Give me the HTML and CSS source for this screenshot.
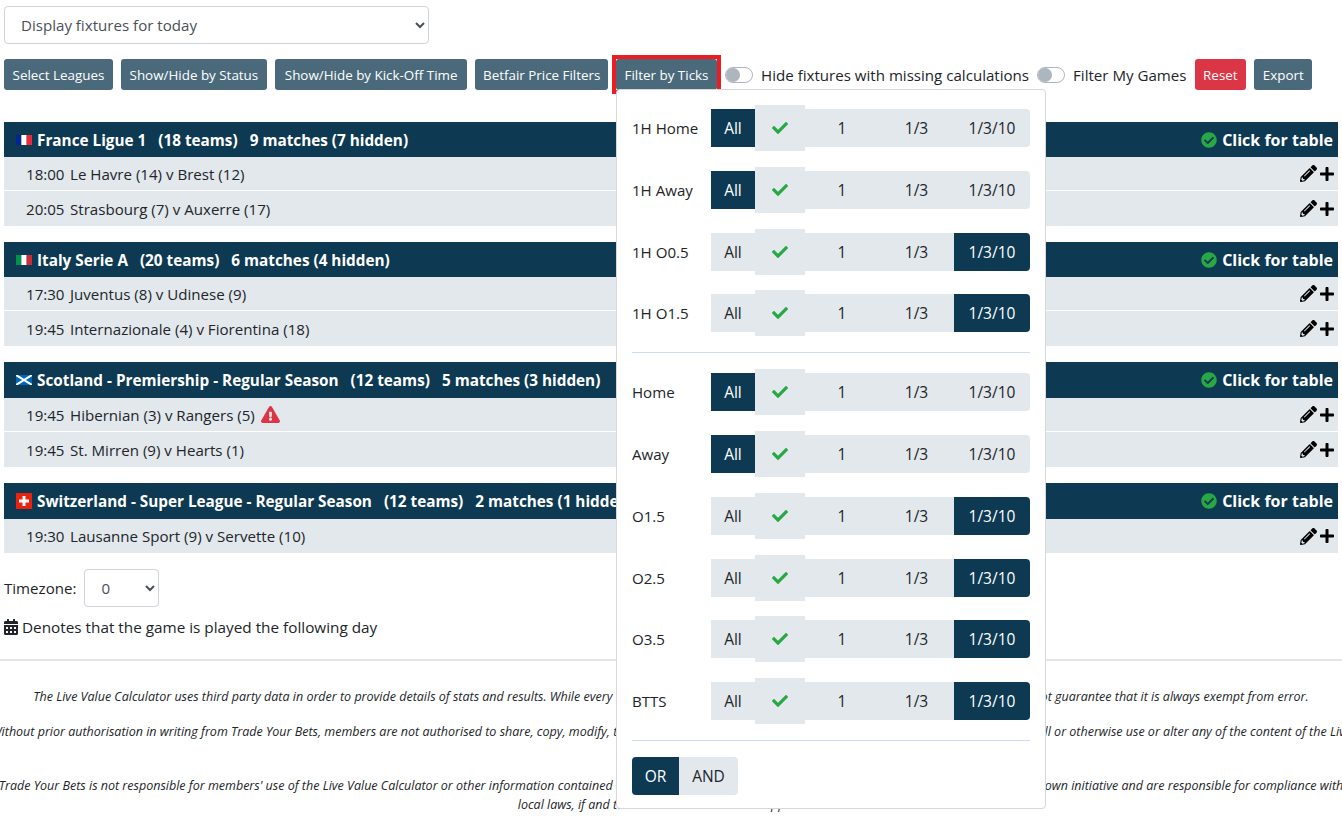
FILE: index.html
```html
<!DOCTYPE html>
<html lang="en">
<head>
    <meta charset="UTF-8">
    <title>Live Value Calculator</title>
    <link rel="stylesheet" href="styles.css">
</head>
<body>
    <svg class="defs" width="0" height="0">
        <symbol id="i-check" viewBox="0 0 512 512"><path d="M173.898 439.404l-166.4-166.4c-9.997-9.997-9.997-26.206 0-36.204l36.203-36.204c9.997-9.998 26.207-9.998 36.204 0L192 312.69 432.095 72.596c9.997-9.997 26.207-9.997 36.204 0l36.203 36.204c9.997 9.997 9.997 26.206 0 36.204l-294.4 294.401c-9.998 9.997-26.207 9.997-36.204-.001z"/></symbol>
        <symbol id="i-circle" viewBox="0 0 512 512"><path d="M504 256c0 136.967-111.033 248-248 248S8 392.967 8 256 119.033 8 256 8s248 111.033 248 248zM227.314 387.314l184-184c6.248-6.248 6.248-16.379 0-22.627l-22.627-22.627c-6.248-6.249-16.379-6.249-22.628 0L216 308.118l-70.059-70.059c-6.248-6.248-16.379-6.248-22.628 0l-22.627 22.627c-6.248 6.248-6.248 16.379 0 22.627l104 104c6.249 6.249 16.379 6.249 22.628.001z"/></symbol>
        <symbol id="i-pencil" viewBox="0 0 512 512"><path d="M497.9 142.1l-46.1 46.1c-4.7 4.7-12.3 4.7-17 0l-111-111c-4.7-4.7-4.7-12.3 0-17l46.1-46.1c18.7-18.7 49.1-18.7 67.9 0l60.1 60.1c18.8 18.7 18.8 49.1 0 67.9zM284.2 99.8L21.6 362.4.4 483.9c-2.9 16.4 11.4 30.6 27.8 27.8l121.5-21.3 262.6-262.6c4.7-4.7 4.7-12.3 0-17l-111-111c-4.8-4.7-12.4-4.7-17.1 0zM124.1 339.9c-5.5-5.5-5.5-14.3 0-19.8l154-154c5.5-5.5 14.3-5.5 19.8 0s5.5 14.3 0 19.8l-154 154c-5.5 5.5-14.3 5.5-19.8 0zM88 424h48v36.3l-64.5 11.3-31.1-31.1L51.7 376H88v48z"/></symbol>
        <symbol id="i-plus" viewBox="0 0 448 512"><path d="M416 208H272V64c0-17.67-14.33-32-32-32h-32c-17.67 0-32 14.33-32 32v144H32c-17.67 0-32 14.33-32 32v32c0 17.67 14.33 32 32 32h144v144c0 17.67 14.33 32 32 32h32c17.67 0 32-14.33 32-32V304h144c17.67 0 32-14.33 32-32v-32c0-17.67-14.33-32-32-32z"/></symbol>
        <symbol id="i-warn" viewBox="0 0 576 512"><path d="M569.517 440.013C587.975 472.007 564.806 512 527.94 512H48.054c-36.937 0-59.999-40.055-41.577-71.987L246.423 23.985c18.467-32.009 64.72-31.951 83.154 0l239.94 416.028zM288 354c-25.405 0-46 20.595-46 46s20.595 46 46 46 46-20.595 46-46-20.595-46-46-46zm-43.673-165.346l7.418 136c.347 6.364 5.609 11.346 11.982 11.346h48.546c6.373 0 11.635-4.982 11.982-11.346l7.418-136c.375-6.874-5.098-12.654-11.982-12.654h-63.383c-6.884 0-12.356 5.78-11.981 12.654z"/></symbol>
        <symbol id="i-cal" viewBox="0 0 448 512"><path d="M0 464c0 26.5 21.5 48 48 48h352c26.5 0 48-21.5 48-48V192H0v272zm320-196c0-6.6 5.4-12 12-12h40c6.6 0 12 5.4 12 12v40c0 6.6-5.4 12-12 12h-40c-6.6 0-12-5.4-12-12v-40zm0 128c0-6.6 5.4-12 12-12h40c6.6 0 12 5.4 12 12v40c0 6.6-5.4 12-12 12h-40c-6.6 0-12-5.4-12-12v-40zM192 268c0-6.6 5.4-12 12-12h40c6.6 0 12 5.4 12 12v40c0 6.6-5.4 12-12 12h-40c-6.6 0-12-5.4-12-12v-40zm0 128c0-6.6 5.4-12 12-12h40c6.6 0 12 5.4 12 12v40c0 6.6-5.4 12-12 12h-40c-6.6 0-12-5.4-12-12v-40zM64 268c0-6.6 5.4-12 12-12h40c6.6 0 12 5.4 12 12v40c0 6.6-5.4 12-12 12H76c-6.6 0-12-5.4-12-12v-40zm0 128c0-6.6 5.4-12 12-12h40c6.6 0 12 5.4 12 12v40c0 6.6-5.4 12-12 12H76c-6.6 0-12-5.4-12-12v-40zM400 64h-48V16c0-8.8-7.2-16-16-16h-32c-8.8 0-16 7.2-16 16v48H160V16c0-8.8-7.2-16-16-16h-32c-8.8 0-16 7.2-16 16v48H48C21.5 64 0 85.5 0 112v48h448v-48c0-26.5-21.5-48-48-48z"/></symbol>
    </svg>

    <div class="top">
        <select class="day-select">
            <option>Display fixtures for today</option>
        </select>

        <div class="toolbar">
            <button class="btn">Select Leagues</button>
            <button class="btn">Show/Hide by Status</button>
            <button class="btn btn-wide">Show/Hide by Kick-Off Time</button>
            <button class="btn btn-tight">Betfair Price Filters</button>
            <div class="filter-wrap">
                <button class="btn btn-marked">Filter by Ticks</button>
                <div class="ticks-menu">
                    <div class="tick-row">
                        <span class="tick-label">1H Home</span>
                        <div class="seg"><span class="on">All</span><span class="tick"><svg class="ico-check"><use href="#i-check"/></svg></span><span>1</span><span>1/3</span><span>1/3/10</span></div>
                    </div>
                    <div class="tick-row">
                        <span class="tick-label">1H Away</span>
                        <div class="seg"><span class="on">All</span><span class="tick"><svg class="ico-check"><use href="#i-check"/></svg></span><span>1</span><span>1/3</span><span>1/3/10</span></div>
                    </div>
                    <div class="tick-row">
                        <span class="tick-label">1H O0.5</span>
                        <div class="seg"><span>All</span><span class="tick"><svg class="ico-check"><use href="#i-check"/></svg></span><span>1</span><span>1/3</span><span class="on">1/3/10</span></div>
                    </div>
                    <div class="tick-row">
                        <span class="tick-label">1H O1.5</span>
                        <div class="seg"><span>All</span><span class="tick"><svg class="ico-check"><use href="#i-check"/></svg></span><span>1</span><span>1/3</span><span class="on">1/3/10</span></div>
                    </div>
                    <div class="menu-line"></div>
                    <div class="tick-row">
                        <span class="tick-label">Home</span>
                        <div class="seg"><span class="on">All</span><span class="tick"><svg class="ico-check"><use href="#i-check"/></svg></span><span>1</span><span>1/3</span><span>1/3/10</span></div>
                    </div>
                    <div class="tick-row">
                        <span class="tick-label">Away</span>
                        <div class="seg"><span class="on">All</span><span class="tick"><svg class="ico-check"><use href="#i-check"/></svg></span><span>1</span><span>1/3</span><span>1/3/10</span></div>
                    </div>
                    <div class="tick-row">
                        <span class="tick-label">O1.5</span>
                        <div class="seg"><span>All</span><span class="tick"><svg class="ico-check"><use href="#i-check"/></svg></span><span>1</span><span>1/3</span><span class="on">1/3/10</span></div>
                    </div>
                    <div class="tick-row">
                        <span class="tick-label">O2.5</span>
                        <div class="seg"><span>All</span><span class="tick"><svg class="ico-check"><use href="#i-check"/></svg></span><span>1</span><span>1/3</span><span class="on">1/3/10</span></div>
                    </div>
                    <div class="tick-row">
                        <span class="tick-label">O3.5</span>
                        <div class="seg"><span>All</span><span class="tick"><svg class="ico-check"><use href="#i-check"/></svg></span><span>1</span><span>1/3</span><span class="on">1/3/10</span></div>
                    </div>
                    <div class="tick-row">
                        <span class="tick-label">BTTS</span>
                        <div class="seg"><span>All</span><span class="tick"><svg class="ico-check"><use href="#i-check"/></svg></span><span>1</span><span>1/3</span><span class="on">1/3/10</span></div>
                    </div>
                    <div class="menu-line"></div>
                    <div class="logic"><span class="on">OR</span><span>AND</span></div>
                </div>
            </div>
            <span class="switch"></span>
            <span class="switch-text">Hide fixtures with missing calculations</span>
            <span class="switch"></span>
            <span class="switch-text">Filter My Games</span>
            <button class="btn btn-red">Reset</button>
            <button class="btn">Export</button>
        </div>

        <div class="league">
            <div class="league-head">
                <div class="league-title">
                    <svg class="flag" viewBox="0 0 3 2" preserveAspectRatio="none"><rect width="1" height="2" fill="#002395"/><rect x="1" width="1" height="2" fill="#fff"/><rect x="2" width="1" height="2" fill="#ed2939"/></svg>
                    <span>France Ligue 1</span><span>(18 teams)</span><span>9 matches (7 hidden)</span>
                </div>
                <div class="table-link"><svg class="ico-circle"><use href="#i-circle"/></svg>Click for table</div>
            </div>
            <div class="fixture">
                <span class="time">18:00</span><span>Le Havre (14) v Brest (12)</span>
                <div class="row-icons"><svg class="ico-pencil"><use href="#i-pencil"/></svg><svg class="ico-plus"><use href="#i-plus"/></svg></div>
            </div>
            <div class="fixture">
                <span class="time">20:05</span><span>Strasbourg (7) v Auxerre (17)</span>
                <div class="row-icons"><svg class="ico-pencil"><use href="#i-pencil"/></svg><svg class="ico-plus"><use href="#i-plus"/></svg></div>
            </div>
        </div>

        <div class="league">
            <div class="league-head">
                <div class="league-title">
                    <svg class="flag" viewBox="0 0 3 2" preserveAspectRatio="none"><rect width="1" height="2" fill="#009246"/><rect x="1" width="1" height="2" fill="#fff"/><rect x="2" width="1" height="2" fill="#ce2b37"/></svg>
                    <span>Italy Serie A</span><span>(20 teams)</span><span>6 matches (4 hidden)</span>
                </div>
                <div class="table-link"><svg class="ico-circle"><use href="#i-circle"/></svg>Click for table</div>
            </div>
            <div class="fixture">
                <span class="time">17:30</span><span>Juventus (8) v Udinese (9)</span>
                <div class="row-icons"><svg class="ico-pencil"><use href="#i-pencil"/></svg><svg class="ico-plus"><use href="#i-plus"/></svg></div>
            </div>
            <div class="fixture">
                <span class="time">19:45</span><span>Internazionale (4) v Fiorentina (18)</span>
                <div class="row-icons"><svg class="ico-pencil"><use href="#i-pencil"/></svg><svg class="ico-plus"><use href="#i-plus"/></svg></div>
            </div>
        </div>

        <div class="league">
            <div class="league-head league-head-tall">
                <div class="league-title">
                    <svg class="flag" viewBox="0 0 5 3" preserveAspectRatio="none"><rect width="5" height="3" fill="#0065bd"/><path d="M0 0L5 3M5 0L0 3" stroke="#fff" stroke-width=".6"/></svg>
                    <span>Scotland - Premiership - Regular Season</span><span>(12 teams)</span><span>5 matches (3 hidden)</span>
                </div>
                <div class="table-link"><svg class="ico-circle"><use href="#i-circle"/></svg>Click for table</div>
            </div>
            <div class="fixture">
                <span class="time">19:45</span><span>Hibernian (3) v Rangers (5)</span><svg class="ico-warn"><use href="#i-warn"/></svg>
                <div class="row-icons"><svg class="ico-pencil"><use href="#i-pencil"/></svg><svg class="ico-plus"><use href="#i-plus"/></svg></div>
            </div>
            <div class="fixture">
                <span class="time">19:45</span><span>St. Mirren (9) v Hearts (1)</span>
                <div class="row-icons"><svg class="ico-pencil"><use href="#i-pencil"/></svg><svg class="ico-plus"><use href="#i-plus"/></svg></div>
            </div>
        </div>

        <div class="league">
            <div class="league-head league-head-tall">
                <div class="league-title">
                    <svg class="flag flag-square" viewBox="0 0 16 16"><rect width="16" height="16" fill="#e8220f"/><path d="M6.5 3h3v3.5H13v3H9.500V13h-3V9.500H3v-3h3.500z" fill="#fff"/></svg>
                    <span>Switzerland - Super League - Regular Season</span><span>(12 teams)</span><span>2 matches (1 hidden)</span>
                </div>
                <div class="table-link"><svg class="ico-circle"><use href="#i-circle"/></svg>Click for table</div>
            </div>
            <div class="fixture">
                <span class="time">19:30</span><span>Lausanne Sport (9) v Servette (10)</span>
                <div class="row-icons"><svg class="ico-pencil"><use href="#i-pencil"/></svg><svg class="ico-plus"><use href="#i-plus"/></svg></div>
            </div>
        </div>

        <div class="timezone">
            <label>Timezone:</label>
            <select class="tz-select"><option>0</option></select>
        </div>
        <div class="denotes"><svg class="ico-cal"><use href="#i-cal"/></svg> Denotes that the game is played the following day</div>
    </div>

    <hr class="rule">

    <div class="legal">
        <p>The Live Value Calculator uses third party data in order to provide details of stats and results. While every reasonable effort is made to ensure the accuracy of this information, we do not guarantee that it is always exempt from error.</p>
        <p>Without prior authorisation in writing from Trade Your Bets, members are not authorised to share, copy, modify, transmit, reproduce, publish, license, create derivative works from, transfer, sell or otherwise use or alter any of the content of the Live<br>Value Calculator.</p>
        <p>Trade Your Bets is not responsible for members' use of the Live Value Calculator or other information contained in it or accessed through this website. All members use the calculator on their own initiative and are responsible for compliance with<br>local laws, if and to the extent local laws are applicable.</p>
    </div>
</body>
</html>
```

FILE: styles.css
```css
html, body {
    margin: 0;
    padding: 0;
    height: 819px;
    overflow: hidden;
}
body {
    font-family: "Open Sans", Arial, sans-serif;
    font-size: 15.1px;
    color: #212529;
    background: #fff;
}
.defs {
    display: block;
    height: 0;
}
.top {
    padding: 6px 4px 0;
}
.day-select {
    display: block;
    width: 425px;
    height: 38px;
    padding: 0 12px;
    font: inherit;
    color: #495057;
    background: #fff;
    border: 1px solid #ced4da;
    border-radius: 4px;
}
.toolbar {
    display: flex;
    align-items: center;
    margin-top: 15px;
    height: 31px;
}
.btn {
    height: 31px;
    padding: 0 8.6px;
    margin-right: 8px;
    font-family: inherit;
    font-size: 13.4px;
    color: #fff;
    white-space: nowrap;
    background: #4a6a7b;
    border: 0;
    border-radius: 3px;
}
.btn-wide {
    padding: 0 10px;
}
.btn-tight {
    padding: 0 7.6px;
}
.btn-red {
    background: #dc3545;
}
.btn-marked {
    display: block;
    margin-right: 0;
}
.filter-wrap {
    position: relative;
    margin-right: 8px;
}
/* red marker round the open button */
.filter-wrap::after {
    content: "";
    position: absolute;
    inset: -4px;
    border: 4px solid #ed1c24;
    pointer-events: none;
}
.switch {
    position: relative;
    flex: none;
    width: 26px;
    height: 14px;
    margin-right: 8px;
    background: #fff;
    border: 1px solid #adb5bd;
    border-radius: 8px;
}
.switch::before {
    content: "";
    position: absolute;
    left: 0;
    top: 0;
    width: 14px;
    height: 14px;
    background: #adb5bd;
    border-radius: 50%;
}
.switch-text {
    margin-right: 8px;
    white-space: nowrap;
}

/* dropdown for ticks */
.ticks-menu {
    position: absolute;
    left: 0;
    top: 30px;
    z-index: 5;
    box-sizing: border-box;
    width: 430px;
    height: 720px;
    padding: 15px 15px 0;
    background: #fff;
    border: 1px solid #d5d7d9;
    border-radius: 4px;
}
.tick-row {
    display: flex;
    align-items: center;
    height: 46px;
    margin-bottom: 15.8px;
}
.tick-label {
    width: 79px;
}
.seg {
    display: flex;
    align-items: center;
    height: 38px;
    font-size: 15.5px;
}
.seg span {
    display: flex;
    align-items: center;
    justify-content: center;
    height: 38px;
    background: #e2e8ec;
}
.seg span:nth-child(1) { width: 44px; }
.seg span:nth-child(2) { width: 50px; height: 46px; }
.seg span:nth-child(3) { width: 74px; }
.seg span:nth-child(4) { width: 75px; }
.seg span:nth-child(5) {
    width: 76px;
    border-radius: 0 4px 4px 0;
}
.seg .on, .logic .on {
    color: #fff;
    background: #0d3a52;
}
.ico-check {
    width: 16px;
    height: 16px;
    fill: #28a745;
}
.menu-line {
    height: 1px;
    margin-bottom: 16px;
    background: #c9ddf3;
}
.logic {
    display: flex;
    width: 106px;
    height: 38px;
    font-size: 15.5px;
    border-radius: 4px;
    overflow: hidden;
}
.logic span {
    display: flex;
    align-items: center;
    justify-content: center;
    width: 59px;
    background: #e2e8ec;
}
.logic span.on {
    width: 47px;
}

/* leagues */
.league {
    margin-bottom: 16px;
}
.toolbar + .league {
    margin-top: 31.5px;
}
.league-head {
    display: flex;
    align-items: center;
    justify-content: space-between;
    box-sizing: border-box;
    height: 35px;
    padding: 1px 5px 0 12px;
    font-size: 15.3px;
    font-weight: 700;
    color: #fff;
    white-space: nowrap;
    background: #0d3a52;
}
.league-head-tall {
    height: 36px;
}
.league-title {
    display: flex;
    align-items: center;
}
.league-title span {
    margin-right: 12px;
}
.flag {
    flex: none;
    width: 16px;
    height: 10px;
    margin-right: 5px;
}
.flag-square {
    height: 16px;
}
.table-link {
    display: flex;
    align-items: center;
    font-size: 16px;
}
.ico-circle {
    width: 16px;
    height: 16px;
    margin-right: 5px;
    fill: #28a745;
}
.fixture {
    display: flex;
    align-items: center;
    box-sizing: border-box;
    height: 34.5px;
    padding: 1px 4px 0 22px;
    background: #e2e8ec;
    border-bottom: 1px solid #fff;
}
.fixture:last-child {
    border-bottom: 0;
}
.time {
    width: 44px;
}
.ico-warn {
    width: 19px;
    height: 17px;
    margin-left: 6px;
    fill: #dc3545;
}
.row-icons {
    display: flex;
    align-items: center;
    margin-left: auto;
}
.ico-pencil {
    width: 17px;
    height: 17px;
    margin-right: 3px;
    fill: #000;
}
.ico-plus {
    width: 14px;
    height: 16px;
    fill: #000;
}
.timezone {
    display: flex;
    align-items: center;
}
.timezone label {
    margin-right: 8px;
}
.tz-select {
    width: 75px;
    height: 38px;
    padding: 0 12px;
    font: inherit;
    color: #495057;
    background: #fff;
    border: 1px solid #ced4da;
    border-radius: 4px;
}
.denotes {
    display: flex;
    align-items: center;
    margin-top: 10px;
    height: 20px;
    font-size: 15.3px;
    white-space: pre;
}
.ico-cal {
    width: 14px;
    height: 16px;
    fill: #212529;
}
.rule {
    height: 0;
    margin: 22px 0 0;
    border: 0;
    border-top: 2px solid #e5e5e5;
}
.legal {
    margin: 26px -100px 0;
    font-size: 12.5px;
    font-style: italic;
    line-height: 19px;
    text-align: center;
    white-space: nowrap;
}
.legal p {
    margin: 0 0 16px;
}
```
